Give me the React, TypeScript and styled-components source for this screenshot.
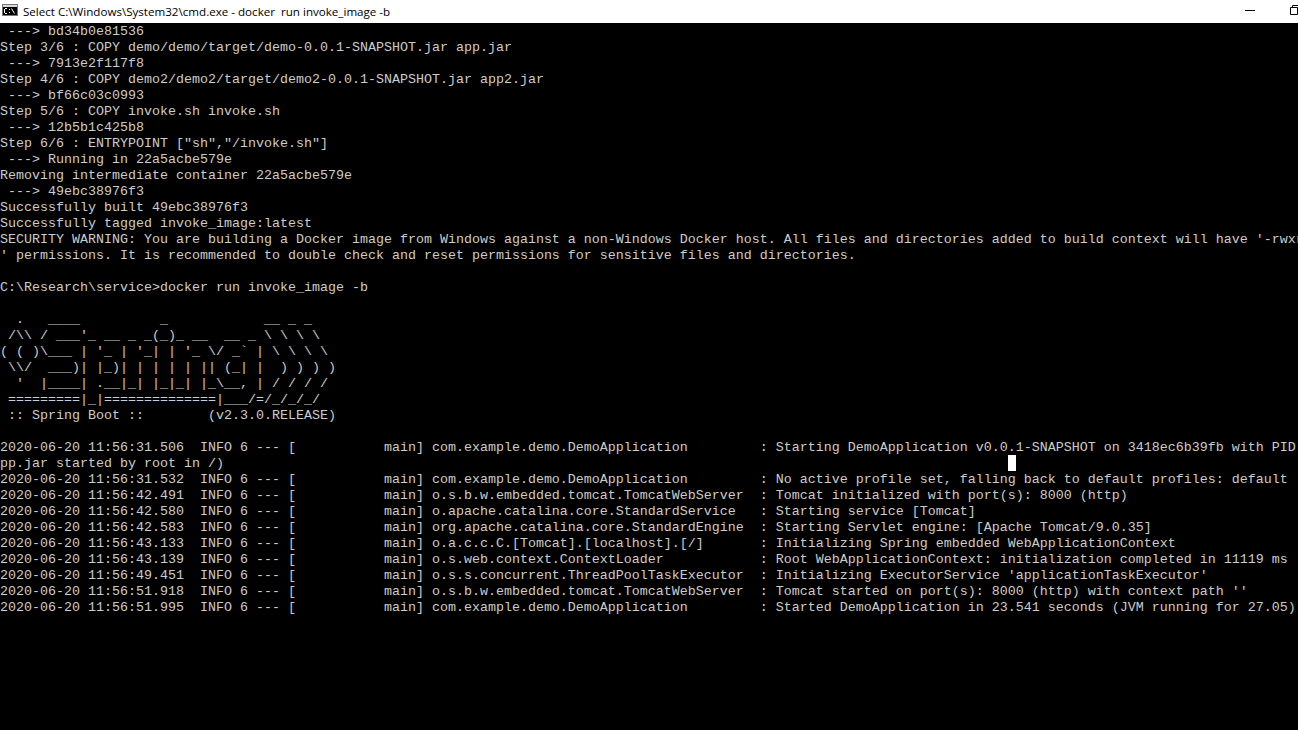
import styled, { createGlobalStyle } from 'styled-components';

const GlobalStyle = createGlobalStyle`
  html, body {
    margin: 0;
    padding: 0;
    background: #000;
    overflow: hidden;
  }
`;

const Window = styled.div`
  width: 1298px;
  height: 730px;
  display: flex;
  flex-direction: column;
  overflow: hidden;
  background: #000;
`;

const TitleBar = styled.div`
  height: 23px;
  flex: none;
  display: flex;
  align-items: center;
  background: #fff;
  color: #000;
  font-family: 'Open Sans', 'Noto Sans', sans-serif;
  font-size: 11.6px;
  white-space: pre;
`;

const AppIcon = styled.svg`
  width: 16px;
  height: 16px;
  flex: none;
  align-self: flex-start;
  margin: 2px 5px 0 2px;
`;

const Title = styled.span`
  flex: 1;
`;

const Caption = styled.svg`
  flex: none;
  width: 10px;
  height: 10px;
  align-self: flex-start;
  margin-top: 5px;
`;

const MinimizeIcon = styled(Caption)`
  margin-right: 35px;
`;

const RestoreIcon = styled(Caption)`
  margin-right: -2px;
`;

const Console = styled.pre`
  margin: 0;
  flex: 1;
  overflow: hidden;
  color: #ccc;
  font-family: 'Liberation Mono', monospace;
  font-size: 13.333px;
  line-height: 18px;
`;

const Line = styled.div`
  height: 16px;
  white-space: pre;
`;

const Cursor = styled.span`
  display: inline-block;
  width: 8px;
  height: 16px;
  background: #fff;
  vertical-align: top;
`;

const before = [
  ' ---> bd34b0e81536',
  'Step 3/6 : COPY demo/demo/target/demo-0.0.1-SNAPSHOT.jar app.jar',
  ' ---> 7913e2f117f8',
  'Step 4/6 : COPY demo2/demo2/target/demo2-0.0.1-SNAPSHOT.jar app2.jar',
  ' ---> bf66c03c0993',
  'Step 5/6 : COPY invoke.sh invoke.sh',
  ' ---> 12b5b1c425b8',
  'Step 6/6 : ENTRYPOINT ["sh","/invoke.sh"]',
  ' ---> Running in 22a5acbe579e',
  'Removing intermediate container 22a5acbe579e',
  ' ---> 49ebc38976f3',
  'Successfully built 49ebc38976f3',
  'Successfully tagged invoke_image:latest',
  "SECURITY WARNING: You are building a Docker image from Windows against a non-Windows Docker host. All files and directories added to build context will have '-rwxr-xr-x",
  "' permissions. It is recommended to double check and reset permissions for sensitive files and directories.",
  '',
  'C:\\Research\\service>docker run invoke_image -b',
  '',
  "  .   ____          _            __ _ _",
  " /\\\\ / ___'_ __ _ _(_)_ __  __ _ \\ \\ \\ \\",
  "( ( )\\___ | '_ | '_| | '_ \\/ _` | \\ \\ \\ \\",
  " \\\\/  ___)| |_)| | | | | || (_| |  ) ) ) )",
  "  '  |____| .__|_| |_|_| |_\\__, | / / / /",
  " =========|_|==============|___/=/_/_/_/",
  ' :: Spring Boot ::        (v2.3.0.RELEASE)',
  '',
  '2020-06-20 11:56:31.506  INFO 6 --- [           main] com.example.demo.DemoApplication         : Starting DemoApplication v0.0.1-SNAPSHOT on 3418ec6b39fb with PID 6 (/a',
];

const after = [
  '2020-06-20 11:56:31.532  INFO 6 --- [           main] com.example.demo.DemoApplication         : No active profile set, falling back to default profiles: default',
  '2020-06-20 11:56:42.491  INFO 6 --- [           main] o.s.b.w.embedded.tomcat.TomcatWebServer  : Tomcat initialized with port(s): 8000 (http)',
  '2020-06-20 11:56:42.580  INFO 6 --- [           main] o.apache.catalina.core.StandardService   : Starting service [Tomcat]',
  '2020-06-20 11:56:42.583  INFO 6 --- [           main] org.apache.catalina.core.StandardEngine  : Starting Servlet engine: [Apache Tomcat/9.0.35]',
  '2020-06-20 11:56:43.133  INFO 6 --- [           main] o.a.c.c.C.[Tomcat].[localhost].[/]       : Initializing Spring embedded WebApplicationContext',
  '2020-06-20 11:56:43.139  INFO 6 --- [           main] o.s.web.context.ContextLoader            : Root WebApplicationContext: initialization completed in 11119 ms',
  "2020-06-20 11:56:49.451  INFO 6 --- [           main] o.s.s.concurrent.ThreadPoolTaskExecutor  : Initializing ExecutorService 'applicationTaskExecutor'",
  "2020-06-20 11:56:51.918  INFO 6 --- [           main] o.s.b.w.embedded.tomcat.TomcatWebServer  : Tomcat started on port(s): 8000 (http) with context path ''",
  '2020-06-20 11:56:51.995  INFO 6 --- [           main] com.example.demo.DemoApplication         : Started DemoApplication in 23.541 seconds (JVM running for 27.05)',
];

function App() {
  return (
    <Window>
      <GlobalStyle />
      <TitleBar>
        <AppIcon viewBox="0 0 16 16">
          <rect x="0" y="2" width="16" height="12" fill="#777" />
          <rect x="1" y="3" width="14" height="2" fill="#d8d8d8" />
          <rect x="1" y="5" width="14" height="8" fill="#000" />
          <path d="M2.5 7v4M3 6.5h2M3 11.5h2M7 7.5h1M7 10.5h1M9.5 6.5l3 5" stroke="#fff" strokeWidth="1" fill="none" />
        </AppIcon>
        <Title>Select C:\Windows\System32\cmd.exe - docker  run invoke_image -b</Title>
        <MinimizeIcon viewBox="0 0 10 10">
          <path d="M0 5.5h10" stroke="#000" strokeWidth="1" />
        </MinimizeIcon>
        <RestoreIcon viewBox="0 0 10 10">
          <path d="M2.5 2V.5h7v7H8M.5 2.5h7v7h-7z" stroke="#000" strokeWidth="1" fill="none" />
        </RestoreIcon>
      </TitleBar>
      <Console>
        {before.map((text, i) => (
          <Line key={i}>{text}</Line>
        ))}
        <Line>
          {'pp.jar started by root in /)'.padEnd(126, ' ')}
          <Cursor />
        </Line>
        {after.map((text, i) => (
          <Line key={i}>{text}</Line>
        ))}
      </Console>
    </Window>
  );
}

export default App;
